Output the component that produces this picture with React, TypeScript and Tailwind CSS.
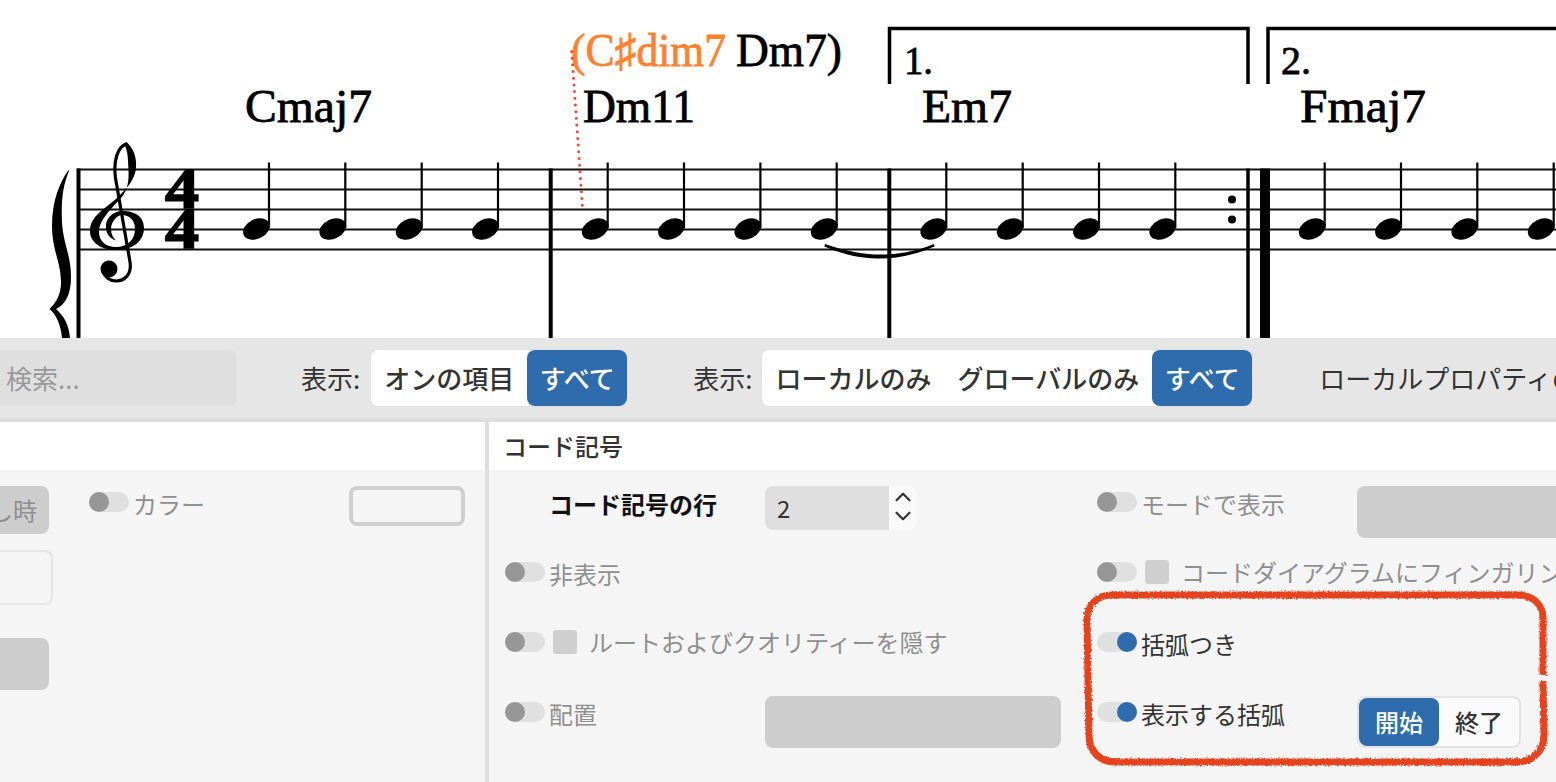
import React from 'react'
import { ChevronUp, ChevronDown } from 'lucide-react'

const STAFF_Y = [169.5, 189.5, 209.5, 229.5, 249.5]
const STEMS = [269, 345.3, 421.7, 498, 607.7, 684, 760.4, 836.7, 946.3, 1022.7, 1099, 1175.3, 1324.7, 1401, 1477.3, 1553.7]
const SERIF = "'Liberation Serif', serif"

function Chord({ x, y, w, size = 46, fill = '#000', children }: { x: number; y: number; w: number; size?: number; fill?: string; children: React.ReactNode }) {
  return (
    <text x={x} y={y} textLength={w} lengthAdjust="spacingAndGlyphs" fontFamily={SERIF} fontSize={size} fill={fill} stroke={fill} strokeWidth={0.8}>
      {children}
    </text>
  )
}

function Score() {
  return (
    <svg width="1556" height="338" viewBox="0 0 1556 338" className="block">
      {STAFF_Y.map(y => (
        <line key={y} x1="77" x2="1556" y1={y} y2={y} stroke="#111" strokeWidth="2" />
      ))}

      {/* barlines */}
      <line x1="78.5" x2="78.5" y1="168.5" y2="338" stroke="#000" strokeWidth="4" />
      <line x1="550.7" x2="550.7" y1="168.5" y2="338" stroke="#000" strokeWidth="4" />
      <line x1="889.3" x2="889.3" y1="168.5" y2="338" stroke="#000" strokeWidth="4" />
      <line x1="1248" x2="1248" y1="168.5" y2="338" stroke="#000" strokeWidth="3.5" />
      <rect x="1260" y="168.5" width="10" height="170" fill="#000" />
      <circle cx="1232" cy="199.5" r="4" fill="#000" />
      <circle cx="1232" cy="219.5" r="4" fill="#000" />

      {/* brace */}
      <path d="M68.5,170 C60,182 52,200 52,226 C52,250 61,262 61,283 C61,294 56,303 49.5,309 C56,314 61,325 62,338 L70,338 C69,325 64,316 56,309 C65,305 71,295 71,277 C71,255 63,243 62,222 C61,200 63,185 69,171 Z" fill="#000" />

      {/* treble clef */}
      <path d="M126,142 C133,147 137,157 136,168 C135,180 126,189 117,198 C105,209 90,216 90,231 C90,243 102,250 116,250 C133,250 144,241 144,228 C144,216 134,211 123,211 C112,211 105,219 106,228 C106.5,235 111,239 116,240.5 C113,238 111,234 111,229 C111,222 117,215 122,215 C129,215 135,220 135,229 C135,240 127,247 116,247 C106,247 99,241 99,232 C99,220 112,208 121,198 C128,190 129,180 128.5,170 C128,160 128,152 125,146 Z" fill="#000" />
      <path d="M126,144 C118,147 113,160 115.5,178 L130,262 C132,275 124,281 116,281 C110,281 105,277 103,272" fill="none" stroke="#000" strokeWidth="3.2" strokeLinecap="round" />
      <circle cx="109" cy="269" r="8.5" fill="#000" />

      {/* time signature */}
      <text x="165" y="208" textLength="34" lengthAdjust="spacingAndGlyphs" fontFamily={SERIF} fontWeight="700" fontSize="58" stroke="#000" strokeWidth="1.5">4</text>
      <text x="165" y="248" textLength="34" lengthAdjust="spacingAndGlyphs" fontFamily={SERIF} fontWeight="700" fontSize="58" stroke="#000" strokeWidth="1.5">4</text>

      {/* notes */}
      {STEMS.map(x => (
        <g key={x}>
          <line x1={x} x2={x} y1="162.5" y2="228" stroke="#000" strokeWidth="2.2" />
          <ellipse cx={x - 12.6} cy="229" rx="14" ry="9.8" transform={`rotate(-26 ${x - 12.6} 229)`} fill="#000" />
        </g>
      ))}

      {/* tie */}
      <path d="M825,244 C848,252 865,254.5 880,254.5 C897,254.5 915,252 934,244 L934.5,246.5 C915,255 897,258.5 880,258.5 C865,258.5 846,256 824.5,246.5 Z" fill="#000" />

      {/* volta brackets */}
      <path d="M889.5,84 V28.5 H1248 V84" fill="none" stroke="#000" strokeWidth="3.5" />
      <path d="M1268,84 V28.5 H1556" fill="none" stroke="#000" strokeWidth="3.5" />
      <Chord x={904} y={74} w={29} size={40}>1.</Chord>
      <Chord x={1281} y={74} w={30} size={40}>2.</Chord>

      {/* chords */}
      <Chord x={245} y={121.5} w={127}>Cmaj7</Chord>
      <Chord x={583} y={121.5} w={112}>Dm11</Chord>
      <Chord x={922} y={121.5} w={90}>Em7</Chord>
      <Chord x={1300} y={121.5} w={126}>Fmaj7</Chord>
      <Chord x={571} y={66} w={155} fill="#fd8230">(C♯dim7</Chord>
      <Chord x={736} y={66} w={106}>Dm7)</Chord>

      <line x1="571.7" y1="51.5" x2="582.7" y2="211" stroke="#e84a35" strokeWidth="3" strokeLinecap="round" strokeDasharray="0 6.7" />
    </svg>
  )
}

function Toggle({ on }: { on?: boolean }) {
  return (
    <span className={`flex h-5 w-10 shrink-0 rounded-full bg-[#e0e0e0] ${on ? 'justify-end' : 'justify-start'}`}>
      <span className={`size-5 rounded-full ${on ? 'bg-[#2f6cad]' : 'bg-[#969696]'}`} />
    </span>
  )
}

function Segments({ items }: { items: string[] }) {
  return (
    <div className="flex h-[58px] rounded-lg border border-[#e0e0e0] bg-white font-medium">
      {items.map((item, i) =>
        i === items.length - 1 ? (
          <span key={item} className="flex w-[100px] items-center justify-center rounded-lg bg-[#2f6cad] text-white">{item}</span>
        ) : (
          <span key={item} className="flex items-center px-[13px] text-[#333]">{item}</span>
        )
      )}
    </div>
  )
}

function Field({ on, check, label, bold, children }: { on?: boolean; check?: boolean; label: string; bold?: boolean; children?: React.ReactNode }) {
  return (
    <div className="flex items-start">
      <div className="flex w-[260px] shrink-0 items-start whitespace-nowrap">
        {bold ? (
          <span className="ml-[44px] mt-[2px] text-[24px] leading-[32px] font-bold text-[#111]">{label}</span>
        ) : (
          <>
            <span className="mt-[6px]"><Toggle on={on} /></span>
            {check ? (
              <>
                <span className="ml-2 mt-1 size-6 shrink-0 rounded-[3px] bg-[#cfcfcf]" />
                <span className="ml-3 text-[24px] leading-[32px] text-[#8f8f8f]">{label}</span>
              </>
            ) : (
              <span className={`ml-1 mt-[2px] text-[24px] leading-[32px] ${on ? 'text-[#333]' : 'text-[#8f8f8f]'}`}>{label}</span>
            )}
          </>
        )}
      </div>
      {children}
    </div>
  )
}

export default function App() {
  return (
    <div className="relative h-[782px] w-[1556px] overflow-hidden bg-white font-['Noto_Sans_CJK_JP','Noto_Sans',sans-serif]">
      <Score />

      {/* filter bar */}
      <div className="flex h-[84px] items-center whitespace-nowrap border-b-4 border-[#dedede] bg-[#e6e6e6] pb-[1px] text-[26px] leading-none">
        <input placeholder="検索..." className="ml-[-12px] h-14 w-[249px] rounded-lg bg-[#dfdfdf] pl-[18px] placeholder:text-[#999999]" />
        <span className="ml-16 mr-[10px] text-[#333]">表示:</span>
        <Segments items={['オンの項目', 'すべて']} />
        <span className="ml-[65px] mr-[9px] text-[#333]">表示:</span>
        <Segments items={['ローカルのみ', 'グローバルのみ', 'すべて']} />
        <span className="ml-[66px] text-[#333]">ローカルプロパティの表示</span>
      </div>

      <div className="flex h-[360px]">
        {/* left column, scrolled off */}
        <div className="w-[485px] shrink-0 bg-[#f5f5f5]">
          <div className="h-12 bg-white" />
          <div className="flex pt-4">
            <div className="flex w-[89px] shrink-0 flex-col">
              <div className="flex h-12 w-[49px] items-center justify-end overflow-hidden whitespace-nowrap rounded-r-lg bg-[#cdcdcd] pr-3 text-[24px] text-[#8f8f8f]">押し時</div>
              <div className="mt-4 h-[55px] w-[53px] rounded-r-lg border-2 border-l-0 border-[#e4e4e4]" />
              <div className="mt-[33px] h-[52px] w-[49px] rounded-r-lg bg-[#cdcdcd]" />
            </div>
            <div className="flex h-10 w-[376px] items-start">
              <span className="mt-[6px]"><Toggle /></span>
              <span className="ml-1 mt-[2px] text-[24px] leading-[32px] text-[#8f8f8f]">カラー</span>
              <span className="ml-auto h-10 w-[116px] rounded-lg border-4 border-[#cfcfcf]" />
            </div>
          </div>
        </div>
        <div className="w-1 shrink-0 bg-[#dedede]" />

        {/* chord symbol section */}
        <div className="min-w-0 flex-1 bg-[#f5f5f5]">
          <div className="flex h-12 items-center bg-white pl-[14px] text-[24px] font-medium text-[#333]">コード記号</div>
          <div className="grid grid-cols-[556px_556px] gap-x-9 gap-y-[18px] pl-4 pt-4 auto-rows-[52px]">
            <Field bold label="コード記号の行">
              <div className="flex h-11 w-[152px] overflow-hidden rounded-lg">
                <div className="flex w-[124px] items-center bg-[#dfdfdf] pl-3 text-[24px] text-[#333]">2</div>
                <div className="flex flex-1 flex-col items-center justify-center bg-[#f9f9f9] pb-[3px] text-[#333]">
                  <ChevronUp size={26} strokeWidth={2} className="-mb-[7px] shrink-0" />
                  <ChevronDown size={26} strokeWidth={2} className="shrink-0" />
                </div>
              </div>
            </Field>
            <Field label="モードで表示">
              <div className="h-[52px] w-[296px] rounded-lg bg-[#cdcdcd]" />
            </Field>
            <Field label="非表示" />
            <Field check label="コードダイアグラムにフィンガリングを表示" />
            <Field check label="ルートおよびクオリティーを隠す" />
            <Field on label="括弧つき" />
            <Field label="配置">
              <div className="h-[52px] w-[296px] rounded-lg bg-[#cdcdcd]" />
            </Field>
            <Field on label="表示する括弧">
              <div className="flex h-[52px] w-[164px] rounded-lg border-2 border-[#e4e4e4] bg-[#fafafa] text-[24px] font-medium">
                <span className="flex w-20 items-center justify-center rounded-lg bg-[#2f6cad] text-white">開始</span>
                <span className="flex flex-1 items-center justify-center text-[#333]">終了</span>
              </div>
            </Field>
          </div>
        </div>
      </div>

      {/* hand drawn annotation */}
      <svg width="1556" height="782" viewBox="0 0 1556 782" className="pointer-events-none absolute left-0 top-0">
        <defs>
          <filter id="rough" x="-5%" y="-5%" width="110%" height="110%">
            <feTurbulence type="fractalNoise" baseFrequency="0.6" numOctaves="2" seed="4" />
            <feDisplacementMap in="SourceGraphic" scale="4" />
          </filter>
        </defs>
        <path d="M1543,675 L1543,618 C1543,604 1532,595 1518,595 L1112,595 C1098,595 1087,604 1087,620 L1089,735 C1089,752 1100,762 1116,762 L1516,762 C1532,762 1544,752 1544,735 L1543,681" fill="none" stroke="#e8431f" strokeWidth="7" filter="url(#rough)" />
      </svg>
    </div>
  )
}
